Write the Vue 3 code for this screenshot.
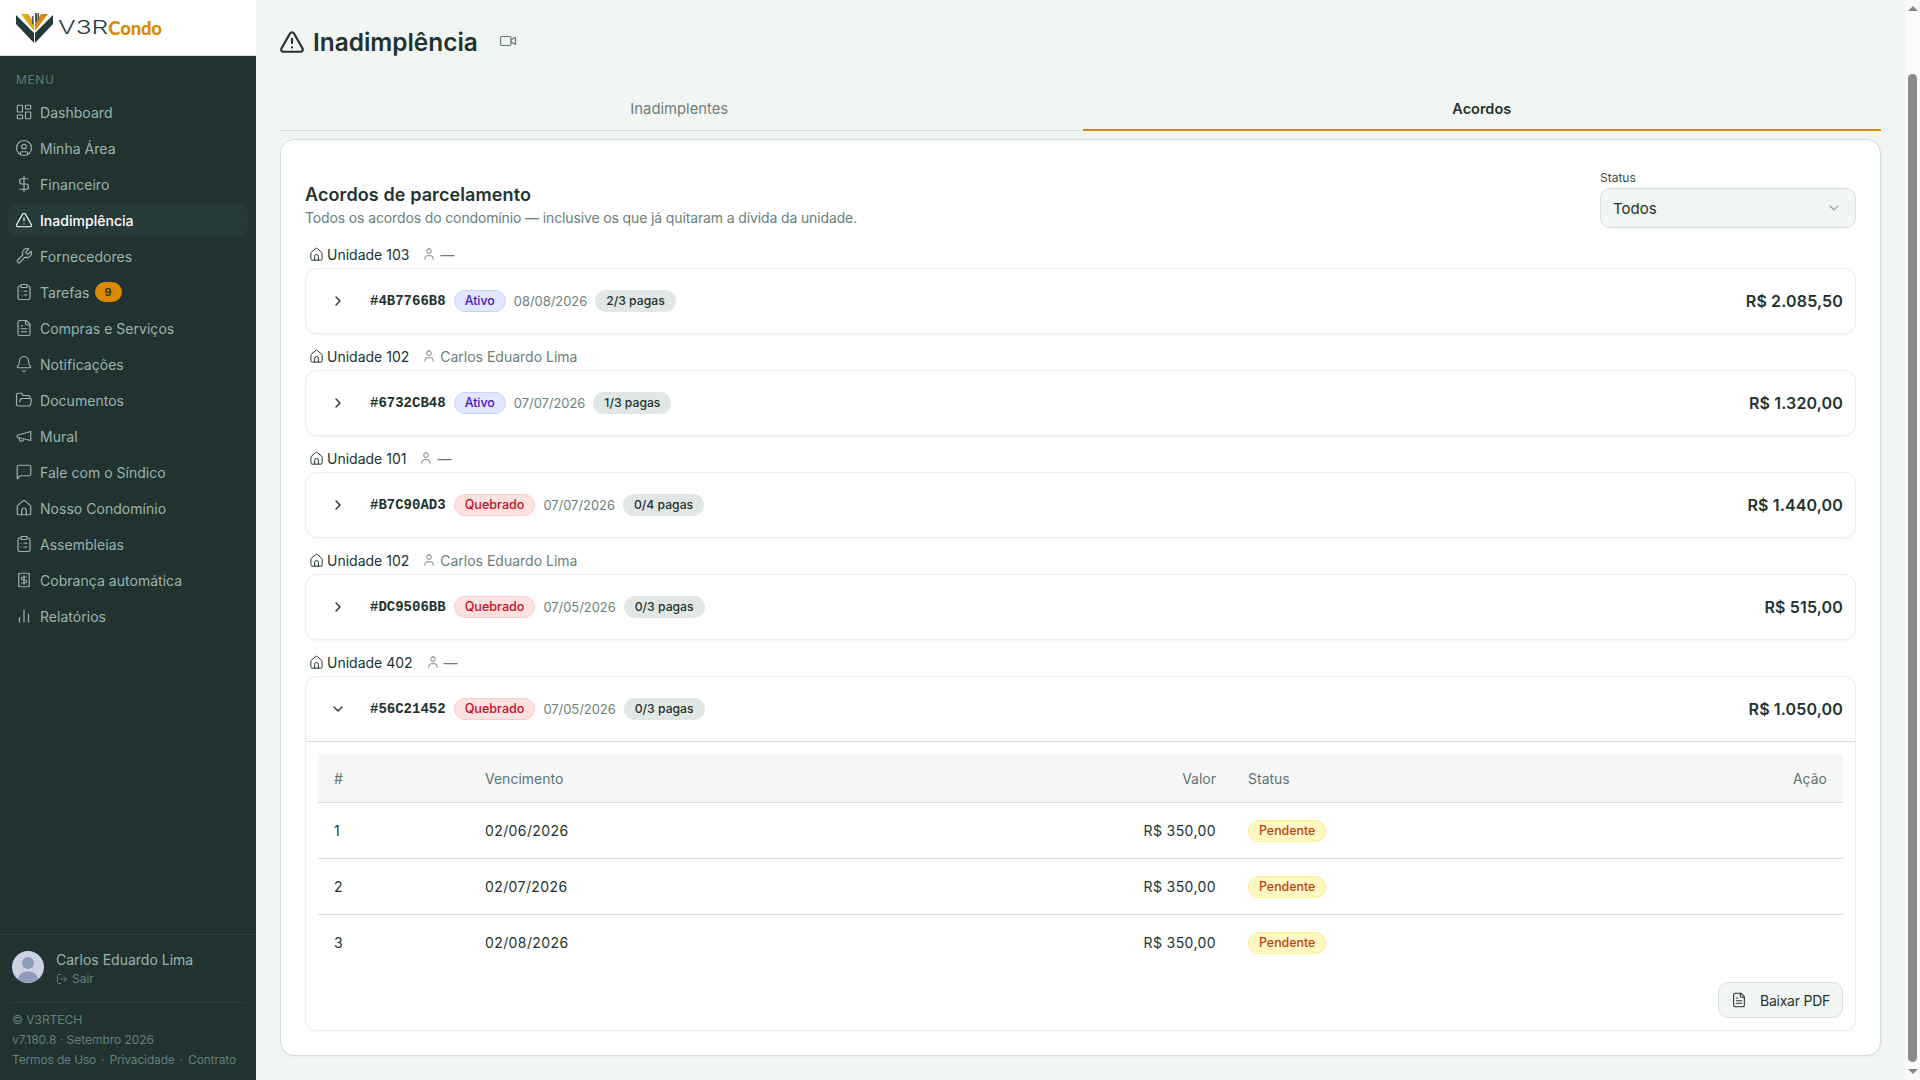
<script setup>
const icons = {
  dashboard: ['M4 3h5a1 1 0 0 1 1 1v7a1 1 0 0 1-1 1H4a1 1 0 0 1-1-1V4a1 1 0 0 1 1-1z', 'M15 3h5a1 1 0 0 1 1 1v3a1 1 0 0 1-1 1h-5a1 1 0 0 1-1-1V4a1 1 0 0 1 1-1z', 'M15 12h5a1 1 0 0 1 1 1v7a1 1 0 0 1-1 1h-5a1 1 0 0 1-1-1v-7a1 1 0 0 1 1-1z', 'M4 16h5a1 1 0 0 1 1 1v3a1 1 0 0 1-1 1H4a1 1 0 0 1-1-1v-3a1 1 0 0 1 1-1z'],
  userCircle: ['M12 2a10 10 0 1 0 0 20a10 10 0 1 0 0-20z', 'M12 7a3 3 0 1 0 0 6a3 3 0 1 0 0-6z', 'M7 20.662V19a2 2 0 0 1 2-2h6a2 2 0 0 1 2 2v1.662'],
  dollar: ['M12 2v20', 'M17 5H9.5a3.5 3.5 0 0 0 0 7h5a3.5 3.5 0 0 1 0 7H6'],
  alert: ['m21.73 18-8-14a2 2 0 0 0-3.48 0l-8 14A2 2 0 0 0 4 21h16a2 2 0 0 0 1.73-3', 'M12 9v4', 'M12 17h.01'],
  wrench: ['M14.7 6.3a1 1 0 0 0 0 1.4l1.6 1.6a1 1 0 0 0 1.4 0l3.77-3.77a6 6 0 0 1-7.94 7.94l-6.91 6.91a2.12 2.12 0 0 1-3-3l6.91-6.91a6 6 0 0 1 7.94-7.94l-3.76 3.76z'],
  clipboard: ['M9 2h6a1 1 0 0 1 1 1v2a1 1 0 0 1-1 1H9a1 1 0 0 1-1-1V3a1 1 0 0 1 1-1z', 'M16 4h2a2 2 0 0 1 2 2v14a2 2 0 0 1-2 2H6a2 2 0 0 1-2-2V6a2 2 0 0 1 2-2h2', 'M12 11h4', 'M12 16h4', 'M8 11h.01', 'M8 16h.01'],
  file: ['M15 2H6a2 2 0 0 0-2 2v16a2 2 0 0 0 2 2h12a2 2 0 0 0 2-2V7Z', 'M14 2v4a2 2 0 0 0 2 2h4', 'M10 9H8', 'M16 13H8', 'M16 17H8'],
  bell: ['M3.262 15.326A1 1 0 0 0 4 17h16a1 1 0 0 0 .74-1.673C19.41 13.956 18 12.499 18 8A6 6 0 0 0 6 8c0 4.499-1.411 5.956-2.738 7.326', 'M10.268 21a2 2 0 0 0 3.464 0'],
  folder: ['m6 14 1.5-2.9A2 2 0 0 1 9.24 10H20a2 2 0 0 1 1.94 2.5l-1.54 6a2 2 0 0 1-1.95 1.5H4a2 2 0 0 1-2-2V5a2 2 0 0 1 2-2h3.9a2 2 0 0 1 1.69.9l.81 1.2a2 2 0 0 0 1.67.9H18a2 2 0 0 1 2 2v2'],
  megaphone: ['m3 11 18-5v12L3 14v-3z', 'M11.6 16.8a3 3 0 1 1-5.8-1.6'],
  message: ['M21 15a2 2 0 0 1-2 2H7l-4 4V5a2 2 0 0 1 2-2h14a2 2 0 0 1 2 2z'],
  home: ['M9 21v-6a3 3 0 0 1 6 0v6', 'M3 10a2 2 0 0 1 .709-1.528l7-5.999a2 2 0 0 1 2.582 0l7 5.999A2 2 0 0 1 21 10v9a2 2 0 0 1-2 2H5a2 2 0 0 1-2-2z'],
  receipt: ['M5 3h14v18H5z', 'M15 8h-4.5a2 2 0 0 0 0 4h3a2 2 0 0 1 0 4H9', 'M12 6.5v11'],
  bars: ['M18 20V10', 'M12 20V4', 'M6 20v-6'],
  video: ['m16 13 5.223 3.482a.5.5 0 0 0 .777-.416V7.87a.5.5 0 0 0-.752-.432L16 10.5', 'M4 6h10a2 2 0 0 1 2 2v8a2 2 0 0 1-2 2H4a2 2 0 0 1-2-2V8a2 2 0 0 1 2-2z'],
  user: ['M19 21v-2a4 4 0 0 0-4-4H9a4 4 0 0 0-4 4v2', 'M12 3a4 4 0 1 0 0 8a4 4 0 1 0 0-8z'],
  right: ['m9 18 6-6-6-6'],
  down: ['m6 9 6 6 6-6'],
  logout: ['M9 21H5a2 2 0 0 1-2-2V5a2 2 0 0 1 2-2h4', 'm16 17 5-5-5-5', 'M21 12H9'],
}

const menu = [
  { label: 'Dashboard', icon: 'dashboard' },
  { label: 'Minha Área', icon: 'userCircle' },
  { label: 'Financeiro', icon: 'dollar' },
  { label: 'Inadimplência', icon: 'alert', active: true },
  { label: 'Fornecedores', icon: 'wrench' },
  { label: 'Tarefas', icon: 'clipboard', badge: 9 },
  { label: 'Compras e Serviços', icon: 'file' },
  { label: 'Notificações', icon: 'bell' },
  { label: 'Documentos', icon: 'folder' },
  { label: 'Mural', icon: 'megaphone' },
  { label: 'Fale com o Síndico', icon: 'message' },
  { label: 'Nosso Condomínio', icon: 'home' },
  { label: 'Assembleias', icon: 'clipboard' },
  { label: 'Cobrança automática', icon: 'receipt' },
  { label: 'Relatórios', icon: 'bars' },
]

const acordos = [
  { unit: 'Unidade 103', owner: '—', code: '#4B7766B8', status: 'Ativo', date: '08/08/2026', paid: '2/3 pagas', total: 'R$ 2.085,50' },
  { unit: 'Unidade 102', owner: 'Carlos Eduardo Lima', code: '#6732CB48', status: 'Ativo', date: '07/07/2026', paid: '1/3 pagas', total: 'R$ 1.320,00' },
  { unit: 'Unidade 101', owner: '—', code: '#B7C90AD3', status: 'Quebrado', date: '07/07/2026', paid: '0/4 pagas', total: 'R$ 1.440,00' },
  { unit: 'Unidade 102', owner: 'Carlos Eduardo Lima', code: '#DC9506BB', status: 'Quebrado', date: '07/05/2026', paid: '0/3 pagas', total: 'R$ 515,00' },
  { unit: 'Unidade 402', owner: '—', code: '#56C21452', status: 'Quebrado', date: '07/05/2026', paid: '0/3 pagas', total: 'R$ 1.050,00', open: true },
]

const parcelas = [
  { n: 1, due: '02/06/2026', value: 'R$ 350,00' },
  { n: 2, due: '02/07/2026', value: 'R$ 350,00' },
  { n: 3, due: '02/08/2026', value: 'R$ 350,00' },
]
</script>

<template>
  <div class="app">
    <aside class="sidebar">
      <div class="brand">
        <svg class="logo" width="40" height="34" viewBox="0 0 40 34">
          <path d="M1 4 L19 22 L19 32 L1 13 Z" fill="#23393a" />
          <path d="M38 4 L20 22 L20 32 L38 13 Z" fill="#23393a" />
          <path d="M6 3 L13 3 L19 11 L19 20 Z" fill="#e3a60f" />
          <path d="M33 3 L26 3 L20 11 L20 20 Z" fill="#d98a00" />
          <path d="M17 5h1.500v8H17zM20 2h2v9h-2zM22.500 2H24v7h-1.500z" fill="#4b5a5a" />
        </svg>
        <span class="brand-v3r">V3R</span><span class="brand-condo">Condo</span>
      </div>

      <nav class="nav">
        <div class="nav-title">MENU</div>
        <a v-for="item in menu" :key="item.label" class="nav-item" :class="{ active: item.active }">
          <svg class="ic" width="18" height="18" viewBox="0 0 24 24"><path v-for="d in icons[item.icon]" :key="d" :d="d" /></svg>
          <span>{{ item.label }}</span>
          <span v-if="item.badge" class="nav-badge">{{ item.badge }}</span>
        </a>
      </nav>

      <div class="side-user">
        <svg width="32" height="32" viewBox="0 0 32 32" class="avatar">
          <circle cx="16" cy="16" r="16" fill="#ccd3e2" />
          <circle cx="16" cy="12" r="6" fill="#8f9bba" />
          <path d="M6 28a10 7.500 0 0 1 20 0a16 16 0 0 1-20 0z" fill="#8f9bba" />
        </svg>
        <div>
          <div class="user-name">Carlos Eduardo Lima</div>
          <div class="user-exit">
            <svg class="ic" width="12" height="12" viewBox="0 0 24 24"><path v-for="d in icons.logout" :key="d" :d="d" /></svg>
            Sair
          </div>
        </div>
      </div>

      <div class="side-foot">
        <div class="foot-inner">
          <div>© V3RTECH</div>
          <div>v7.180.8 · Setembro 2026</div>
          <div class="foot-links"><span>Termos de Uso</span><span>·</span><span>Privacidade</span><span>·</span><span>Contrato</span></div>
        </div>
      </div>
    </aside>

    <main class="main">
      <header class="page-head">
        <svg class="ic" width="26" height="26" viewBox="0 0 24 24"><path v-for="d in icons.alert" :key="d" :d="d" /></svg>
        <h1>Inadimplência</h1>
        <svg class="ic video" width="18" height="18" viewBox="0 0 24 24"><path v-for="d in icons.video" :key="d" :d="d" /></svg>
      </header>

      <div class="tabs">
        <div class="tab">Inadimplentes</div>
        <div class="tab active">Acordos</div>
      </div>

      <section class="card">
        <div class="card-head">
          <div>
            <h2>Acordos de parcelamento</h2>
            <p>Todos os acordos do condomínio — inclusive os que já quitaram a dívida da unidade.</p>
          </div>
          <div class="filter">
            <label>Status</label>
            <div class="select">
              <span>Todos</span>
              <svg class="ic" width="16" height="16" viewBox="0 0 24 24"><path v-for="d in icons.down" :key="d" :d="d" /></svg>
            </div>
          </div>
        </div>

        <div v-for="a in acordos" :key="a.code" class="acordo">
          <div class="unit">
            <svg class="ic" width="15" height="15" viewBox="0 0 24 24"><path v-for="d in icons.home" :key="d" :d="d" /></svg>
            <span>{{ a.unit }}</span>
            <svg class="ic owner-ic" width="14" height="14" viewBox="0 0 24 24"><path v-for="d in icons.user" :key="d" :d="d" /></svg>
            <span class="owner">{{ a.owner }}</span>
          </div>

          <div class="box">
            <div class="box-row" :class="{ open: a.open }">
              <svg class="ic chev" width="16" height="16" viewBox="0 0 24 24"><path v-for="d in icons[a.open ? 'down' : 'right']" :key="d" :d="d" /></svg>
              <span class="code">{{ a.code }}</span>
              <span class="pill" :class="a.status === 'Ativo' ? 'ativo' : 'quebrado'">{{ a.status }}</span>
              <span class="date">{{ a.date }}</span>
              <span class="pill paid">{{ a.paid }}</span>
              <span class="total">{{ a.total }}</span>
            </div>

            <div v-if="a.open" class="box-body">
              <table>
                <colgroup>
                  <col class="col-n" />
                  <col class="col-due" />
                  <col class="col-value" />
                  <col />
                  <col class="col-action" />
                </colgroup>
                <thead>
                  <tr>
                    <th>#</th>
                    <th>Vencimento</th>
                    <th class="r">Valor</th>
                    <th>Status</th>
                    <th class="r">Ação</th>
                  </tr>
                </thead>
                <tbody>
                  <tr v-for="p in parcelas" :key="p.n">
                    <td>{{ p.n }}</td>
                    <td>{{ p.due }}</td>
                    <td class="r">{{ p.value }}</td>
                    <td><span class="pill pendente">Pendente</span></td>
                    <td></td>
                  </tr>
                </tbody>
              </table>
              <div class="actions">
                <button class="btn">
                  <svg class="ic" width="16" height="16" viewBox="0 0 24 24"><path v-for="d in icons.file" :key="d" :d="d" /></svg>
                  <span>Baixar PDF</span>
                </button>
              </div>
            </div>
          </div>
        </div>
      </section>
    </main>

    <div class="scrollbar">
      <i class="arrow up"></i>
      <div class="track"><div class="thumb"></div></div>
      <i class="arrow dn"></i>
    </div>
  </div>
</template>

<style>
html, body {
  margin: 0;
  overflow: hidden;
}
</style>

<style scoped>
.app {
  display: flex;
  height: 1080px;
  background: #f2f6f3;
  color: #22332f;
  font-family: Inter, "Noto Sans", sans-serif;
  font-size: 14px;
}

.ic {
  fill: none;
  stroke: currentColor;
  stroke-width: 2;
  stroke-linecap: round;
  stroke-linejoin: round;
  flex-shrink: 0;
}

.sidebar {
  width: 256px;
  flex-shrink: 0;
  display: flex;
  flex-direction: column;
  background: #213230;
  color: #9cb2ad;
}

.brand {
  height: 55px;
  background: #fff;
  border-bottom: 1px solid #d5dfdc;
  display: flex;
  align-items: center;
  padding-left: 15px;
}

.logo {
  margin-right: 3px;
}

.brand-v3r {
  display: inline-block;
  font-size: 19px;
  font-weight: 300;
  color: #2a3d3c;
  transform: scaleX(1.38);
  transform-origin: left center;
  margin-right: 14px;
}

.brand-condo {
  font-family: Lato, sans-serif;
  font-size: 18.5px;
  font-weight: 900;
  color: #d98a00;
  letter-spacing: -0.2px;
}

.nav {
  flex: 1;
  padding: 16px 8px 0;
}

.nav-title {
  font-size: 12px;
  line-height: 16px;
  letter-spacing: 0.6px;
  color: #5f7a75;
  padding-left: 8px;
  margin-bottom: 8px;
}

.nav-item {
  display: flex;
  align-items: center;
  gap: 7px;
  height: 32px;
  margin-bottom: 4px;
  padding-left: 7px;
  border-radius: 8px;
  font-size: 14px;
  letter-spacing: 0.03px;
}

.nav-item .ic {
  stroke-width: 1.6;
}

.nav-item.active {
  background: #273a3a;
  color: #fff;
  font-weight: 500;
}

.nav-badge {
  margin-left: -2px;
  padding: 0 10px;
  height: 20px;
  line-height: 20px;
  border-radius: 10px;
  background: #d98a00;
  color: #22332f;
  font-size: 11px;
  font-weight: 600;
}

.side-user {
  display: flex;
  align-items: center;
  gap: 12px;
  height: 68px;
  padding: 0 12px;
  border-top: 1px solid #2b4040;
  box-sizing: border-box;
}

.avatar {
  margin-top: -3px;
}

.user-name {
  font-size: 14px;
  line-height: 20px;
}

.user-exit {
  display: flex;
  align-items: center;
  gap: 4px;
  font-size: 12px;
  line-height: 18px;
  color: #667f7a;
}

.side-foot {
  padding: 0 12px 10px;
  font-size: 12px;
  line-height: 20px;
  letter-spacing: -0.03px;
  color: #667f7a;
}

.foot-inner {
  border-top: 1px solid #2b4040;
  padding-top: 7px;
}

.foot-links {
  display: flex;
  gap: 5px;
  letter-spacing: -0.15px;
}

.main {
  flex: 1;
  min-width: 0;
  padding: 20px 24px 0;
}

.page-head {
  height: 44px;
  display: flex;
  align-items: center;
  gap: 8px;
  margin-bottom: 22px;
}

.page-head > .ic:first-child {
  margin-left: -1px;
}

.page-head h1 {
  margin: 0;
  font-size: 24.400px;
  font-weight: 600;
}

.page-head .video {
  margin-left: 13px;
  margin-top: -3px;
  color: #5f7a75;
  stroke-width: 1.600;
}

.tabs {
  display: flex;
  gap: 4px;
  border-bottom: 1px solid #d5dfdc;
  margin-bottom: 8px;
}

.tab {
  flex: 1;
  height: 44px;
  line-height: 46px;
  text-align: center;
  font-size: 14.800px;
  color: #6b7f7a;
  margin-bottom: -1px;
}

.tab.active {
  color: #22332f;
  font-weight: 600;
  border-bottom: 2px solid #d98a00;
  height: 43px;
  font-size: 14.500px;
}

.card {
  background: #fff;
  border: 1px solid #d5dfdc;
  border-radius: 14px;
  padding: 24px;
  box-shadow: 0 1px 2px rgba(33, 50, 48, 0.05);
}

.card-head {
  display: flex;
  justify-content: space-between;
  align-items: flex-end;
  padding-top: 7px;
  margin-bottom: 16px;
}

.card-head h2 {
  margin: 0;
  font-size: 18px;
  line-height: 26px;
  font-weight: 600;
  letter-spacing: 0.1px;
}

.card-head p {
  margin: 0;
  font-size: 14px;
  line-height: 20px;
  letter-spacing: -0.13px;
  color: #6b7f7a;
}

.filter {
  width: 256px;
}

.filter label {
  display: block;
  font-size: 12px;
  line-height: 14px;
  margin-bottom: 3px;
  color: #3c4d4a;
}

.select {
  height: 40px;
  box-sizing: border-box;
  display: flex;
  align-items: center;
  justify-content: space-between;
  padding: 0 13px 0 12px;
  background: #f2f6f3;
  border: 1px solid #d5dfdc;
  border-radius: 10px;
  font-size: 15px;
}

.select .ic {
  color: #8a9b97;
  stroke-width: 1.600;
}

.acordo {
  margin-bottom: 12px;
}

.acordo:last-child {
  margin-bottom: 0;
}

.unit {
  height: 20px;
  display: flex;
  align-items: center;
  gap: 3px;
  padding-left: 4px;
  margin-bottom: 4px;
  font-size: 14px;
}

.unit .ic {
  stroke-width: 1.600;
}

.owner-ic {
  margin-left: 10px;
  color: #6b7f7a;
}

.owner {
  color: #6b7f7a;
  margin-left: 1px;
}

.box {
  border: 1px solid #e8eeec;
  border-radius: 12px;
  box-shadow: 0 1px 2px rgba(33, 50, 48, 0.05);
}

.box-row {
  height: 64px;
  display: flex;
  align-items: center;
  gap: 8px;
  padding: 0 12px 0 24px;
}

.box-row.open {
  border-bottom: 1px solid #d5dfdc;
}

.chev {
  margin-right: 16px;
}

.code {
  font-family: "Liberation Mono", monospace;
  font-size: 14px;
  font-weight: 700;
}

.pill {
  display: inline-block;
  height: 22px;
  line-height: 20px;
  box-sizing: border-box;
  padding: 0 10px;
  border-radius: 11px;
  border: 1px solid transparent;
  font-size: 12.400px;
  font-weight: 500;
  letter-spacing: 0;
}

.ativo {
  background: #e0e7ff;
  border-color: #c7d2fe;
  color: #4f10c9;
}

.quebrado {
  background: #fee2e2;
  border-color: #fecaca;
  color: #c80d24;
  font-size: 12.600px;
}

.pendente {
  background: #fef9c3;
  border-color: #fef08a;
  color: #c2410c;
}

.paid {
  background: #e0e7e4;
  color: #22332f;
  font-size: 12.200px;
}

.date {
  font-size: 12.900px;
  color: #6b7f7a;
}

.total {
  margin-left: auto;
  font-size: 16px;
  font-weight: 600;
  letter-spacing: 0.15px;
}

.box-body {
  padding: 12px;
}

table {
  width: 100%;
  table-layout: fixed;
  border-collapse: collapse;
}

.col-n {
  width: 151px;
}

.col-due {
  width: 500px;
}

.col-value {
  width: 263px;
}

.col-action {
  width: 200px;
}

th {
  height: 48px;
  padding: 0 16px;
  background: #f5f7f6;
  border-bottom: 1px solid #d5dfdc;
  text-align: left;
  font-size: 14px;
  font-weight: 400;
  color: #5f7370;
}

td {
  height: 55px;
  padding: 0 16px;
  border-bottom: 1px solid #d5dfdc;
  font-size: 14px;
  letter-spacing: 0.4px;
}

tbody tr:last-child td {
  border-bottom: 0;
}

.r {
  text-align: right;
}

.actions {
  display: flex;
  justify-content: flex-end;
  margin-top: 12px;
}

.btn {
  height: 36px;
  padding: 0 12px;
  display: flex;
  align-items: center;
  gap: 13px;
  background: #f2f6f3;
  border: 1px solid #d5dfdc;
  border-radius: 10px;
  color: #22332f;
  font: inherit;
  font-size: 14px;
  letter-spacing: -0.25px;
}

.btn .ic {
  stroke-width: 1.600;
}

.scrollbar {
  width: 15px;
  flex-shrink: 0;
  background: #fafafa;
  display: flex;
  flex-direction: column;
  align-items: center;
}

.arrow {
  width: 0;
  height: 0;
  border-left: 5px solid transparent;
  border-right: 5px solid transparent;
}

.arrow.up {
  margin-top: 6px;
  border-bottom: 5px solid #858585;
}

.arrow.dn {
  margin-bottom: 6px;
  border-top: 5px solid #858585;
}

.track {
  flex: 1;
  width: 9px;
}

.thumb {
  margin-top: 63px;
  height: 988px;
  background: #8a8a8a;
  border-radius: 5px;
}
</style>
